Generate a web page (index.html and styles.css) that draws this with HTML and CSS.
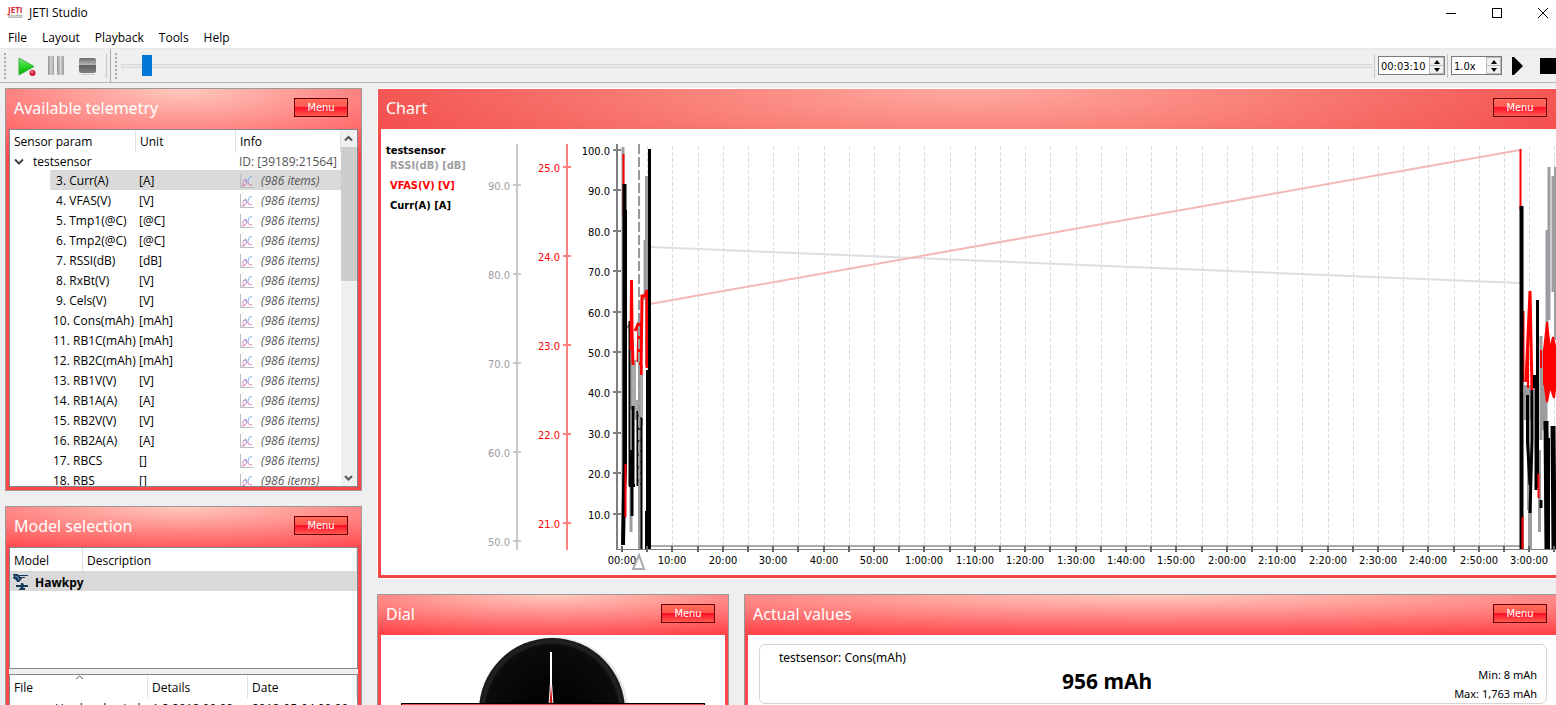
FILE: index.html
```html
<!DOCTYPE html>
<html lang="en">
<head>
<meta charset="utf-8">
<title>JETI Studio</title>
<link rel="stylesheet" href="styles.css">
</head>
<body>
<div class="app">
  <header class="titlebar">
    <span class="logo"><b>JETI</b><i>studio</i></span>
    <span class="app-name">JETI Studio</span>
    <div class="window-buttons">
      <button type="button" aria-label="Minimize"><svg width="12" height="12"><path d="M1 6.5h10" stroke="#000"/></svg></button>
      <button type="button" aria-label="Maximize"><svg width="12" height="12"><rect x="1.500" y="1.500" width="9" height="9" fill="none" stroke="#000"/></svg></button>
      <button type="button" aria-label="Close"><svg width="12" height="12"><path d="M1 1l10 10M11 1L1 11" stroke="#000"/></svg></button>
    </div>
  </header>
  <nav class="menubar">
    <a href="#">File</a><a href="#">Layout</a><a href="#">Playback</a><a href="#">Tools</a><a href="#">Help</a>
  </nav>
  <div class="toolbar">
    <div class="player">
      <span class="grip"></span>
      <button type="button" class="tool play" aria-label="Play">
        <svg width="20" height="22"><defs><linearGradient id="gp" x2="0" y2="1"><stop offset="0" stop-color="#8be98b"/><stop offset=".5" stop-color="#25d725"/><stop offset="1" stop-color="#09a809"/></linearGradient></defs>
        <path d="M2 3L17 11.500 2 20z" fill="url(#gp)" stroke="#3cae3c"/><circle cx="15.500" cy="18" r="3" fill="#d81536"/><ellipse cx="15" cy="17" rx="1.500" ry="1" fill="#f38ba0"/></svg>
      </button>
      <button type="button" class="tool pause" aria-label="Pause">
        <svg width="20" height="22"><defs><linearGradient id="gq"><stop offset="0" stop-color="#909090"/><stop offset=".5" stop-color="#d4d4d4"/><stop offset="1" stop-color="#9a9a9a"/></linearGradient></defs><rect x="2" y="1" width="6" height="19" rx="1" fill="url(#gq)"/><rect x="11" y="1" width="7" height="19" rx="1" fill="url(#gq)"/></svg>
      </button>
      <button type="button" class="tool stop" aria-label="Stop">
        <svg width="20" height="22"><defs><linearGradient id="gs" x2="0" y2="1"><stop offset="0" stop-color="#6c6c6c"/><stop offset=".44" stop-color="#b4b4b4"/><stop offset=".46" stop-color="#5e5e5e"/><stop offset="1" stop-color="#808080"/></linearGradient></defs><rect x="1" y="3" width="17" height="15" rx="2" fill="url(#gs)"/><path d="M3 19.500h14" stroke="#ccc"/></svg>
      </button>
      <span class="sep"></span>
    </div>
    <span class="grip grip-slider"></span>
    <input class="seek" type="range" min="0" max="1000" value="16" aria-label="Playback position">
    <span class="sep"></span>
    <div class="spin spin-time"><input type="text" value="00:03:10" aria-label="Time"><div class="steps"><button type="button" aria-label="Later"><svg width="6" height="4"><path d="M0 4l3-4 3 4z"/></svg></button><button type="button" aria-label="Earlier"><svg width="6" height="4"><path d="M0 0l3 4 3-4z"/></svg></button></div></div>
    <span class="sep"></span>
    <div class="spin spin-rate"><input type="text" value="1.0x" aria-label="Speed"><div class="steps"><button type="button" aria-label="Faster"><svg width="6" height="4"><path d="M0 4l3-4 3 4z"/></svg></button><button type="button" aria-label="Slower"><svg width="6" height="4"><path d="M0 0l3 4 3-4z"/></svg></button></div></div>
    <button type="button" class="tool run" aria-label="Run"><svg width="12" height="18"><path d="M0 0h2l9 9-9 9H0z"/></svg></button>
    <button type="button" class="tool halt" aria-label="Halt"><svg width="16" height="16"><path d="M0 0h16v16H0z"/></svg></button>
  </div>

  <main class="workspace">
    <div class="column side">
      <section class="panel telemetry">
        <div class="panel-head"><h2>Available telemetry</h2><button type="button" class="menu">Menu</button></div>
        <div class="list tree-list">
          <table class="tree">
            <colgroup><col class="c-indent"><col class="c-name"><col class="c-unit"><col></colgroup>
            <thead><tr><th colspan="2">Sensor param</th><th>Unit</th><th>Info</th></tr></thead>
            <tbody id="sensors">
              <tr class="group"><td colspan="2"><svg class="chevron" width="10" height="8"><path d="M1 1.500l4 4 4-4" fill="none" stroke="#444" stroke-width="2"/></svg>testsensor</td><td></td><td class="muted">ID: [39189:21564]</td></tr>
            </tbody>
          </table>
          <div class="scrollbar">
            <svg width="15" height="17"><path d="M4 10.500L7.500 7l3.500 3.500" fill="none" stroke="#555" stroke-width="2"/></svg>
            <div class="thumb"></div>
            <svg width="15" height="17"><path d="M4 7l3.500 3.500L11 7" fill="none" stroke="#555" stroke-width="2"/></svg>
          </div>
        </div>
      </section>
      <section class="panel models">
        <div class="panel-head"><h2>Model selection</h2><button type="button" class="menu">Menu</button></div>
        <div class="list model-list">
          <table>
            <colgroup><col class="c-model"><col></colgroup>
            <thead><tr><th>Model</th><th>Description</th></tr></thead>
            <tbody><tr class="selected"><td colspan="2"><svg class="craft" width="16" height="16" fill="#16395c"><path d="M0 0h5v1h10v1H7v1h5v1H9l-1 2-2 2H4L3 6 0 4V3h1zM8 9h2l1 2h4v2h-4l-1 1h2v2H6v-1l2-1-1-1H3v-2h5z"/><path d="M2 2l3 1 1 3" stroke="#6d95b7" fill="none"/></svg><b>Hawkpy</b></td></tr></tbody>
          </table>
        </div>
        <div class="splitter"></div>
        <div class="list file-list">
          <svg class="sort" width="9" height="5"><path d="M1 4l3.500-3L8 4" fill="none" stroke="#555"/></svg>
          <table>
            <colgroup><col class="c-file"><col class="c-unit"><col></colgroup>
            <thead><tr><th>File</th><th>Details</th><th>Date</th></tr></thead>
            <tbody><tr><td class="file-name">Hawkpy-log.jml</td><td>1.2.2018 00:00</td><td>2018-05-04 00:00</td></tr></tbody>
          </table>
        </div>
      </section>
    </div>

    <div class="column content">
      <section class="panel chart">
        <div class="panel-head"><h2>Chart</h2><button type="button" class="menu">Menu</button></div>
        <svg id="plot" class="plot" role="img" aria-label="Telemetry chart"></svg>
      </section>
      <div class="lower">
        <section class="panel dial">
          <div class="panel-head"><h2>Dial</h2><button type="button" class="menu">Menu</button></div>
          <div class="dial-body">
            <svg width="304" height="140">
              <defs><radialGradient id="face"><stop offset="0" stop-color="#000"/><stop offset=".9" stop-color="#0b0b0b"/><stop offset=".94" stop-color="#222"/><stop offset="1" stop-color="#181818"/></radialGradient></defs>
              <circle cx="153" cy="76" r="74" fill="#eee7e9"/><circle cx="151" cy="76" r="73" fill="url(#face)"/>
              <path d="M150 17v53" stroke="#fff" stroke-width="2"/><path d="M148 70l2-29 2 29z" fill="#d40c0c" stroke="#fff"/>
              <rect x=".5" y="68.500" width="303" height="60" fill="#f04850" stroke="#000"/>
            </svg>
          </div>
        </section>
        <section class="panel values">
          <div class="panel-head"><h2>Actual values</h2><button type="button" class="menu">Menu</button></div>
          <div class="values-body">
            <div class="card">
              <div class="card-name">testsensor: Cons(mAh)</div>
              <div class="card-value">956 mAh</div>
              <div class="card-range"><div>Min: 8 mAh</div><div>Max: 1,763 mAh</div></div>
            </div>
          </div>
        </section>
      </div>
    </div>
  </main>
</div>
<script src="app.js"></script>
</body>
</html>
```
FILE: styles.css
```css
* { box-sizing: border-box; }
html, body { height: 100%; }
body { margin: 0; overflow: hidden; background: #efefef; color: #000; font: 12px "Open Sans", "Noto Sans", sans-serif; }
button, input { font: inherit; }
button { padding: 0; border: 0; background: none; }
svg { display: block; flex: none; }
.app { display: flex; flex-direction: column; height: 100%; }

.titlebar { display: flex; align-items: center; height: 25px; padding-left: 8px; background: #fff; }
.logo { display: flex; flex-direction: column; width: 21px; }
.logo b { color: #d62433; font: bold 8px/8px "Open Sans", sans-serif; }
.logo i { color: #555; font: normal 5px/5px "Open Sans", sans-serif; }
.window-buttons { display: flex; gap: 34px; margin-left: auto; padding-right: 7px; }

.menubar { display: flex; align-items: center; gap: 15px; height: 24px; padding: 2px 0 0 8px; background: #fff; border-bottom: 1px solid #e8e8e8; }
.menubar a { color: #000; text-decoration: none; }

.toolbar { display: flex; align-items: center; height: 34px; border-bottom: 1px solid #b5b5b5; overflow: hidden; background: #efefef; }
.player { display: flex; align-items: center; width: 111px; height: 100%; padding-left: 4px; border-right: 1px solid #aaa; flex: none; }
.grip { flex: none; width: 2px; height: 26px; background: repeating-linear-gradient(#aaa 0 2px, transparent 2px 4px); }
.grip-slider { margin: 0 4px; }
.tool { flex: none; }
.play { margin-left: 11px; }
.pause { margin-left: 9px; }
.stop { margin: 0 8px 0 12px; }
.sep { flex: none; width: 1px; height: 24px; background: #c4c4c4; }
.seek { appearance: none; flex: 1; min-width: 80px; height: 21px; margin: 0 2px 0 0; background: none; }
.seek::-webkit-slider-runnable-track { height: 4px; border: 1px solid #d6d9d9; background: #e7eaea; }
.seek::-webkit-slider-thumb { appearance: none; width: 10px; height: 21px; margin-top: -10px; background: #0078d7; }
.spin { display: flex; flex: none; height: 19px; margin: 0 2px 0 3px; border: 1px solid #7a7a7a; background: #fff; font: 11px "DejaVu Sans Condensed", "DejaVu Sans", sans-serif; }
.spin-time { width: 67px; }
.spin-rate { width: 51px; }
.spin input { flex: 1; min-width: 0; padding: 2px 0 0 2px; border: 0; outline: 0; background: none; }
.steps { display: flex; flex-direction: column; width: 15px; border: 1px solid #bbb; background: #f0f0f0; }
.steps button { display: grid; place-items: center; flex: 1; }
.steps button + button { border-top: 1px solid #bbb; }
.run { margin-left: 8px; }
.halt { margin-left: 16px; }

.workspace { display: flex; flex: 1; gap: 15px; min-height: 0; padding: 5px 0 0 5px; overflow: hidden; }
.column { display: flex; flex-direction: column; gap: 15px; }
.side { width: 357px; flex: none; }
.content { flex: 1; min-width: 0; margin-right: -5px; }
.panel { padding: 0 3px 3px; border: 1px solid #999; background: radial-gradient(350px 42px at 50% 0, #ffc9be 0, #ff464b 100%) no-repeat #ff464b; }
.telemetry { background: radial-gradient(330px 80px at 50% 0, #ffc9be 0, #ff464b 100%) no-repeat #ff464b; }
.models { background: radial-gradient(350px 48px at 50% 0, #ffc9be 0, #ff464b 100%) no-repeat #ff464b; }
.panel-head { display: flex; align-items: center; justify-content: space-between; height: 40px; padding: 0 10px 3px 5px; }
.panel-head h2 { margin: 0; color: #fff; font: 16px "Noto Sans", sans-serif; }
.menu { width: 54px; height: 19px; border: 1px solid #600; color: #fff; background: linear-gradient(#ff6c5c 0, #ff5a50 45%, #ff1028 50%, #ff5a50 100%); font: 11px "DejaVu Sans Condensed", "DejaVu Sans", sans-serif; }

.list { border: 1px solid #828790; background: #fff; overflow: hidden; }
table { width: 100%; border-collapse: separate; border-spacing: 0; table-layout: fixed; }
th, td { padding: 0 0 0 4px; text-align: left; font-weight: normal; white-space: nowrap; }
th { height: 22px; padding-top: 1px; border-right: 1px solid #e0e0e0; line-height: 17px; }
td { height: 20px; padding-top: 2px; line-height: 16px; }
.tree-list { display: flex; height: 358px; }
.tree { width: 0; flex: 1; height: max-content; }
.c-indent { width: 40px; }
.c-name { width: 86px; }
.c-unit { width: 100px; }
.tree td { padding-left: 3px; }
.tree .group td { height: 18px; }
.group .chevron { display: inline-block; margin: 0 9px 0 1px; }
.muted, .count { color: #555; }
.count { font-style: italic; }
.count svg { display: inline-block; margin-right: 7px; vertical-align: -4px; }
.hot td + td, .selected td { background: #d9d9d9; }
.scrollbar { display: flex; flex-direction: column; justify-content: space-between; width: 16px; background: #f0f0f0; }
.thumb { height: 134px; margin-bottom: auto; background: #cdcdcd; }
.model-list { height: 122px; }
.model-list th { height: 23px; }
.c-model { width: 73px; }
.craft { display: inline-block; margin: 0 6px 0 0; vertical-align: -3px; }
.model-list td { padding-left: 3px; }
.splitter { height: 5px; background: #efefef; }
.file-list { position: relative; height: 130px; }
.file-list th { height: 23px; }
.c-file { width: 138px; }
.sort { position: absolute; left: 65px; top: 0; }
.file-list .file-name { padding-left: 45px; overflow: hidden; }

.chart { border-color: #fff; height: 491px; background: radial-gradient(60% 110px at 50% 0, #ffaaa0 0, #f87870 50%, #f24545 100%) no-repeat #f03338; }
.plot { width: 100%; height: 446px; background: #fff; font: 11px "DejaVu Sans Condensed", "DejaVu Sans", sans-serif; }
.plot .legend { font-weight: bold; }
.lower { display: flex; gap: 15px; height: 180px; }
.dial { width: 352px; flex: none; }
.dial-body, .values-body { height: 140px; background: #fff; }
.dial-body { display: flex; justify-content: center; }
.values { flex: 1; min-width: 0; background: radial-gradient(100% 42px at 50% 0, #ffc9be 0, #ff464b 100%) no-repeat #ff464b; }
.values-body { padding: 9px 10px 0 11px; }
.card { display: grid; grid-template-columns: 1fr 102px; grid-template-rows: 16px 40px; height: 60px; padding: 4px 9px 0 19px; border: 1px solid #d5d5d5; border-radius: 6px; font: 12px/18px "Noto Sans", sans-serif; }
.card-name { grid-column: 1 / -1; }
.card-value { text-align: center; font: bold 21px/32px "Noto Sans", sans-serif; }
.card-range { text-align: right; font-size: 11px; line-height: 19px; white-space: nowrap; }
```
FILE: app.js
```js
const sensors = [
  ['3. Curr(A)', '[A]'], ['4. VFAS(V)', '[V]'], ['5. Tmp1(@C)', '[@C]'], ['6. Tmp2(@C)', '[@C]'],
  ['7. RSSI(dB)', '[dB]'], ['8. RxBt(V)', '[V]'], ['9. Cels(V)', '[V]'], ['10. Cons(mAh)', '[mAh]'],
  ['11. RB1C(mAh)', '[mAh]'], ['12. RB2C(mAh)', '[mAh]'], ['13. RB1V(V)', '[V]'], ['14. RB1A(A)', '[A]'],
  ['15. RB2V(V)', '[V]'], ['16. RB2A(A)', '[A]'], ['17. RBCS', '[]'], ['18. RBS', '[]'],
];
const graphIcon = '<svg width="15" height="15" fill="none"><path d="M1.500 0v13.500H15" stroke="#bbb"/><path d="M2.500 12c4 0 5-2 5-5s-2-2-3 0-1 4 1 4M13 10.500c-2 1-4 0-4-2" stroke="#d47ab4"/><path d="M5 6.500c1-1 3 0 2.500 2M13 3c-3-1-4 2-4 6" stroke="#7fa4ea"/></svg>';
document.getElementById('sensors').insertAdjacentHTML('beforeend', sensors.map(([name, unit], i) =>
  `<tr class="${i ? '' : 'hot'}"><td></td><td>${i < 7 ? '&nbsp;' : ''}${name}</td><td>${unit}</td><td class="count">${graphIcon}(986 items)</td></tr>`).join(''));

// Plot coordinates are canvas coordinates, shifted by the canvas origin.
const out = [];
const line = (d, color, width = 1, extra = '') => out.push(`<path d="${d}" fill="none" stroke="${color}" stroke-width="${width}" ${extra}/>`);
const text = (x, y, s, color, anchor = 'end', cls = '') => out.push(`<text x="${x}" y="${y}" fill="${color}" text-anchor="${anchor}" class="${cls}">${s}</text>`);
const gray = '#9d9da1', red = '#ff0000', black = '#000';

for (let i = 0; i < 38; i++) {
  const x = Math.round(622 + i * 25.2) + .5;
  line(`M${x} 146V549`, '#dedede', 1, 'stroke-dasharray="4 2"');
}
line('M650 247L1520 283', '#dedede', 2);
line('M650 304L1520 150', '#f3b8b8', 2);
line('M650 546H1520', '#aaa', 2);

// Opening flight
line('M623 147V545M646.500 176V365M645 240V300', gray, 3);
line('M632 350V410M639.500 345V549M631 480V532', gray, 3);
line('M634 360V410M636.500 400V420M641 365V425', '#aaa', 4);
line('M627 328L630 324', '#888', 2);
line('M623.500 154V215', red, 2);
line('M624.500 184V465L623 545', black, 4);
line('M626 210V465L624 520', black, 2);
line('M625.500 464V517', red, 2);
line('M629.500 321V486', black, 2);
line('M631 350L631.500 280L632 330L633 365M635 331L639 322L638 362M641 375L642 296H645L647 290V368', red, 3);
line('M640 322V375', red, 2);
line('M649.500 149V549', black, 3);
line('M647.500 370V549', black, 3);
line('M633 406V485M631 450V486', black, 3);
line('M629 485.500H635M632 450V516', black, 3);
line('M637.500 411V486M641.500 418V549', black, 2);
line('M637 418H642M637 429H642M637 440H642M637 451H642M637 462H642M637 473H642M637 484H642', black, 1);
line('M647.500 511V549', black, 5);
line('M639 144V549', '#999', 2, 'stroke-dasharray="10 3"');

// Closing flight
line('M1549 167V320M1553 176V292M1555.500 167V340M1547 230V360M1541 336V440', gray, 3);
line('M1526 385V420M1530 385V420M1530 480V549', gray, 4);
line('M1528.500 390V510M1543 350V430M1546 360V430M1539.500 450V532', gray, 3);
line('M1520.500 149V210M1523.500 311V382M1528 350V388M1541 350V368M1544 348V385', red, 2);
line('M1526 382L1530 291L1532 390', red, 3);
line('M1544 350L1547 322L1550 350L1553 337L1556 350V382L1554 398L1550 386L1547 402L1544 380Z', red, 2, 'style="fill:red"');
line('M1521.500 206V549', black, 4);
line('M1527.500 395V442L1530 485M1532 390V440L1530 513M1537.500 300V488', black, 3);
line('M1534.500 375V388M1536 380V490M1541 500V508', black, 3);
line('M1546 421L1547 549M1553 426L1554 549', black, 5);
line('M1549 438V549', black, 2);
line('M1522.500 517V549M1538.500 474V498', red, 2);

const axis = (x, color, label, tick, first, y0, step, count) => {
  line(`M${x} 144V550`, color, 2);
  for (let i = 0; i < count; i++) {
    const y = Math.round(y0 + i * step);
    line(`M${x - 4} ${y}H${x + 4}`, color, 2);
    text(x - 7, y + 5, (first - i * tick).toFixed(1), label);
  }
};
axis(517, '#cacaca', gray, 10, 90, 185, 89, 5);
axis(567, '#ff8080', red, 1, 25, 167, 89, 5);
axis(617, '#808080', black, 10, 100, 150, 40.4, 10);
line('M616 549.500H1600', '#808080', 1);
for (let i = 0; i < 38; i++) {
  const x = Math.round(622 + i * 25.2);
  line(`M${x} 546V552`, '#666', 2);
  if (i % 2 === 0) {
    const m = i / 2 * 10, h = Math.floor(m / 60), r = String(m % 60).padStart(2, '0');
    text(x, 564, h ? `${h}:${r}:00` : `${r}:00`, black, 'middle');
  }
}
out.push('<path d="M639 555l5 14h-11z" fill="#fff" stroke="#aaa" stroke-width="2"/>');
text(386, 154, 'testsensor', black, 'start', 'legend');
text(390, 169, 'RSSI(dB) [dB]', gray, 'start', 'legend');
text(390, 189, 'VFAS(V) [V]', red, 'start', 'legend');
text(390, 209, 'Curr(A) [A]', black, 'start', 'legend');
document.getElementById('plot').innerHTML = `<g transform="translate(-381 -129)">${out.join('')}</g>`;
```
